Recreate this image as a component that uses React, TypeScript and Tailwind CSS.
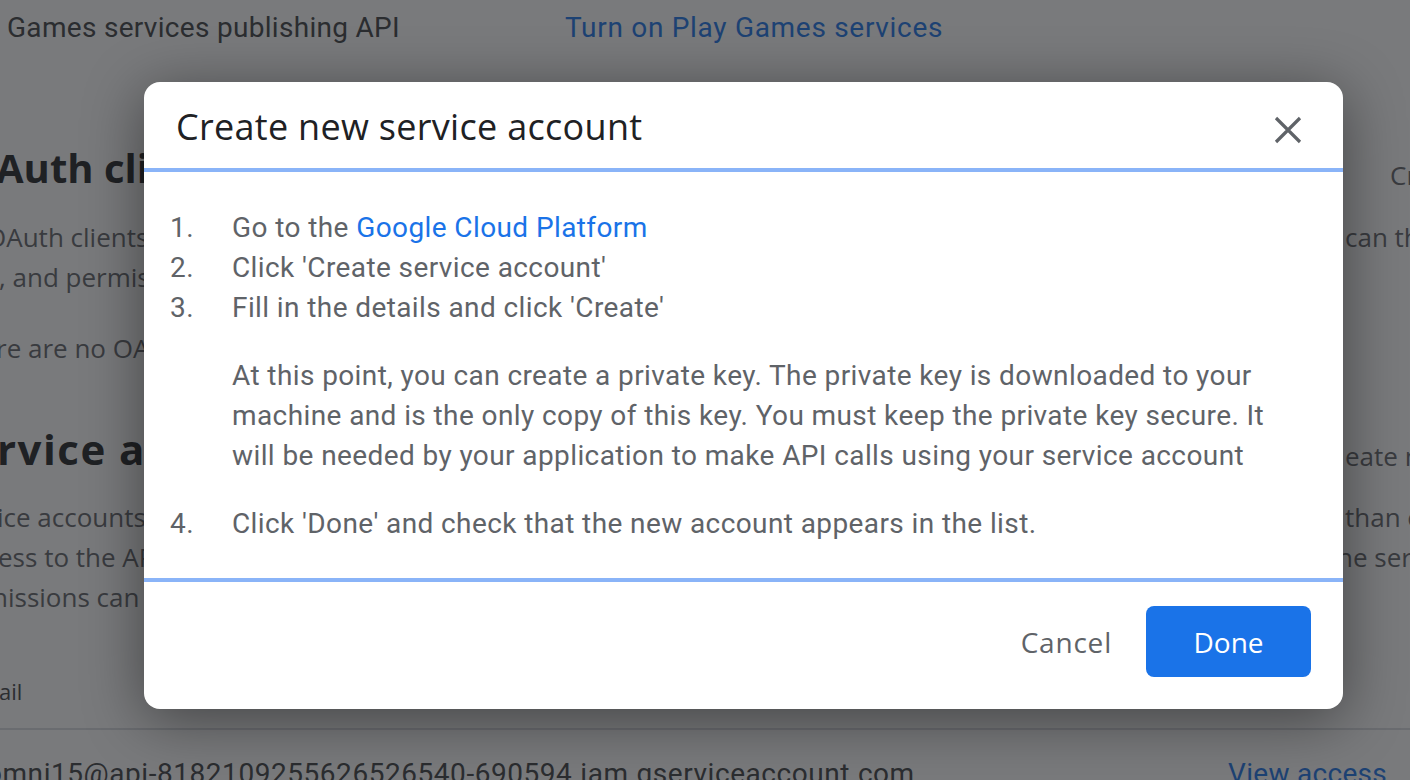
const STEPS_BEFORE = [
  { n: '1.', body: <>Go to the <a className="text-[#1a73e8]">Google Cloud Platform</a></> },
  { n: '2.', body: <>Click 'Create service account'</> },
  { n: '3.', body: <>Fill in the details and click 'Create'</> },
]

function BackgroundPage() {
  return (
    <div className="flex flex-col text-[#5f6368] [font-family:'Open_Sans',sans-serif]">
      <div className="mt-[8px] flex h-[40px] items-center text-[28px] leading-[40px] [font-family:Roboto,sans-serif]">
        <span className="ml-[7px] w-[558px] tracking-[0.3px] text-[#3c4043]">Games services publishing API</span>
        <span className="tracking-[0.7px] text-[#1a73e8]">Turn on Play Games services</span>
      </div>

      <div className="mt-[90px] flex h-[60px] items-center justify-between">
        <span className="ml-[-4px] text-[40px] font-bold text-[#202124]">Auth clients</span>
        <span className="mt-[14px] w-[20px] overflow-hidden whitespace-nowrap text-[26px]">Create</span>
      </div>

      <div className="mt-[19px] flex justify-between text-[26px] leading-[40px]">
        <span className="ml-[-14px]">OAuth clients allow</span>
        <span className="w-[65px] overflow-hidden whitespace-nowrap">can then</span>
      </div>
      <div className="flex text-[26px] leading-[40px]">
        <span className="ml-[-1px]">, and permissions</span>
      </div>

      <div className="mt-[31px] flex text-[26px] leading-[40px]">
        <span className="ml-[-4px]">re are no OAuth</span>
      </div>

      <div className="mt-[50px] flex h-[60px] items-center justify-between">
        <span className="ml-[-3px] text-[42px] font-bold tracking-[1.5px] text-[#202124]">rvice accounts</span>
        <span className="mt-[16px] w-[65px] overflow-hidden whitespace-nowrap text-[26px]">eate new</span>
      </div>

      <div className="mt-[19px] flex justify-between text-[26px] leading-[40px]">
        <span className="ml-[-3px]">ice accounts</span>
        <span className="w-[65px] overflow-hidden whitespace-nowrap">than one</span>
      </div>
      <div className="flex justify-between text-[26px] leading-[40px]">
        <span className="ml-[-2px]">ess to the API</span>
        <span className="w-[73px] overflow-hidden whitespace-nowrap">ne service</span>
      </div>
      <div className="flex text-[26px] leading-[40px]">
        <span className="ml-[-8px]">nissions can</span>
      </div>

      <div className="mt-[59px] h-[30px] text-[22px] font-medium leading-[30px] text-[#3c4043]">
        <span className="ml-[-1px]">ail</span>
      </div>

      <div className="mt-[22px] border-t-2 border-[#dadce0]" />

      <div className="mt-[24px] flex h-[40px] items-center text-[28px] leading-[40px] text-[#3c4043] [font-family:Roboto,sans-serif]">
        <span className="ml-[-14px] w-[1242px] whitespace-nowrap tracking-[0.55px]">
          omni15@api-8182109255626526540-690594.iam.gserviceaccount.com
        </span>
        <span className="tracking-[0.3px] text-[#1a73e8]">View access</span>
      </div>
    </div>
  )
}

function CloseIcon() {
  return (
    <svg width="28" height="28" viewBox="0 0 28 28" className="mt-[6px] text-[#5f6368]">
      <path d="M2 2L26 26M26 2L2 26" stroke="currentColor" strokeWidth="3.2" fill="none" />
    </svg>
  )
}

function ServiceAccountDialog() {
  return (
    <div className="ml-[144px] mt-[82px] flex h-[627px] w-[1199px] flex-col overflow-hidden rounded-[16px] bg-white shadow-[0_10px_60px_rgba(0,0,0,0.45)]">
      {/* Titolo */}
      <div className="flex h-[86px] items-center justify-between pl-[32px] pr-[41px] pt-[4px]">
        <h2 className="text-[36px] font-medium tracking-[0.3px] text-[#202124] [font-family:'Open_Sans',sans-serif]">
          Create new service account
        </h2>
        <CloseIcon />
      </div>
      <div className="h-[4px] bg-[#8ab4f8]" />

      {/* Passaggi */}
      <div className="flex-1 pl-[26px] pt-[36px] text-[28px] leading-[40px] tracking-[0.4px] text-[#5f6368] [font-family:Roboto,sans-serif]">
        {STEPS_BEFORE.map((s) => (
          <div key={s.n} className="flex">
            <span className="w-[62px]">{s.n}</span>
            <span>{s.body}</span>
          </div>
        ))}
        <p className="ml-[62px] mt-[28px] w-[1060px]">
          At this point, you can create a private key. The private key is downloaded to your machine and is the only copy of
          this key. You must keep the private key secure. It will be needed by your application to make API calls using your
          service account
        </p>
        <div className="mt-[28px] flex">
          <span className="w-[62px]">4.</span>
          <span>Click 'Done' and check that the new account appears in the list.</span>
        </div>
      </div>

      <div className="h-[4px] bg-[#8ab4f8]" />
      {/* Azioni */}
      <div className="flex h-[127px] items-start justify-end gap-[12px] pr-[32px] pt-[24px] [font-family:'Open_Sans',sans-serif]">
        <button type="button" className="h-[71px] px-[22px] text-[28px] font-medium tracking-[0.8px] text-[#5f6368]">
          Cancel
        </button>
        <button type="button" className="h-[71px] w-[165px] rounded-[8px] bg-[#1a73e8] text-[28px] font-medium text-white">
          Done
        </button>
      </div>
    </div>
  )
}

export default function App() {
  return (
    <div className="relative h-[780px] w-[1410px] overflow-hidden bg-white">
      <BackgroundPage />
      <div className="absolute inset-0 bg-[rgba(32,33,36,0.6)]">
        <ServiceAccountDialog />
      </div>
    </div>
  )
}
